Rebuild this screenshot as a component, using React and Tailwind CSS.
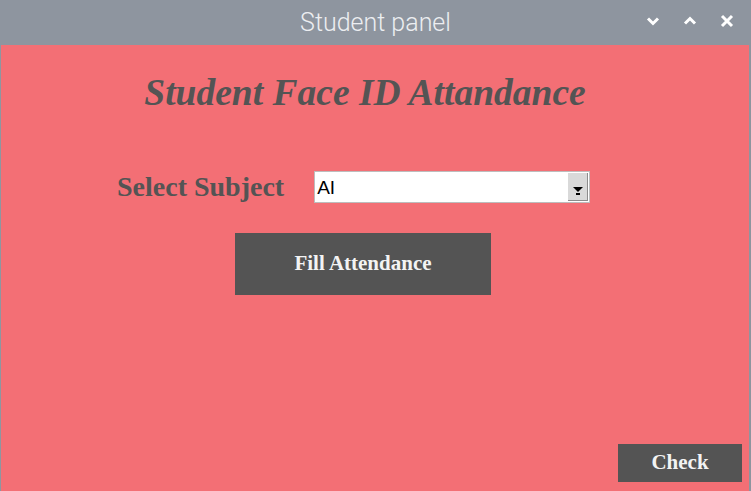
export default function App() {
  return (
    <div className="flex h-[491px] w-[751px] flex-col overflow-hidden bg-[#8e959f]">
      {/* title bar */}
      <div className="relative flex h-[45px] shrink-0 items-center justify-center">
        <span className="font-['Roboto',sans-serif] text-[25px] font-light text-[#eceef1]">Student panel</span>
        <div className="absolute right-[16px] top-[13px] flex items-center gap-[21px] text-white">
          <svg width="16" height="16" viewBox="0 0 16 16"><path d="M3 5.5 8 10.5 13 5.5" fill="none" stroke="currentColor" strokeWidth="3" /></svg>
          <svg width="16" height="16" viewBox="0 0 16 16"><path d="M3 10.5 8 5.5 13 10.5" fill="none" stroke="currentColor" strokeWidth="3" /></svg>
          <svg width="16" height="16" viewBox="0 0 16 16"><path d="M3 3 13 13M13 3 3 13" fill="none" stroke="currentColor" strokeWidth="3" /></svg>
        </div>
      </div>

      {/* window body */}
      <div className="ml-px mr-[2px] flex flex-1 flex-col bg-[#f36f75] font-['Liberation_Serif',serif] text-[#545454]">
        <h1 className="mt-[28px] pr-[20px] text-center text-[37.5px] font-bold italic leading-[40px]">Student Face ID Attandance</h1>

        <div className="mt-[58px] flex items-center">
          <span className="ml-[116px] text-[28px] font-bold leading-[30px]">Select Subject</span>
          <div className="ml-[30px] flex h-[32px] w-[276px] items-center border border-[#bdbdbd] bg-white pl-[2px] pr-px">
            <span className="flex-1 font-['Liberation_Sans',sans-serif] text-[19px] leading-none text-black">AI</span>
            <div className="flex h-[28px] w-[20px] flex-col items-center justify-end border-b border-r border-[#8c8c8c] bg-[#d9d9d9] pb-[5px]">
              <svg width="10" height="8" viewBox="0 0 10 8"><path d="M0 0h10L5 5z" fill="#000" /><rect x="3" y="6" width="4" height="2" fill="#000" /></svg>
            </div>
          </div>
        </div>

        <div className="mt-[30px] flex">
          <button className="ml-[234px] h-[62px] w-[256px] bg-[#545454] text-[21px] font-bold text-[#f3f3f3]">Fill Attendance</button>
        </div>

        <div className="mt-auto mb-[9px] flex justify-end pr-[7px]">
          <button className="h-[38px] w-[124px] bg-[#545454] text-[21px] font-bold text-[#f3f3f3]">Check</button>
        </div>
      </div>
    </div>
  );
}
